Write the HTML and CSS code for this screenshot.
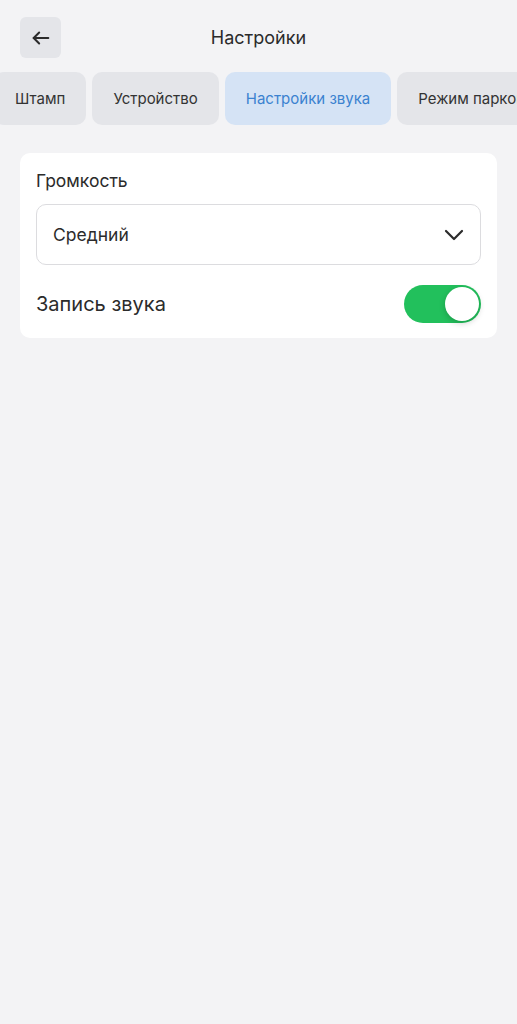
FILE: index.html
```html
<!DOCTYPE html>
<html>
<head>
  <meta charset="UTF-8">
  <title>Настройки</title>
  <link rel="stylesheet" href="styles.css">
</head>
<body>
  <div class="header">
    <button class="back-btn">
      <svg width="22" height="22" viewBox="0 0 24 24" fill="none" stroke="#2b2b2b" stroke-width="2.2" stroke-linecap="round" stroke-linejoin="round">
        <path d="M20 12H4"/>
        <path d="M10 6l-6 6 6 6"/>
      </svg>
    </button>
    <h1 class="title">Настройки</h1>
    <div></div>
  </div>

  <div class="tabs">
    <div class="tab">Штамп</div>
    <div class="tab">Устройство</div>
    <div class="tab active">Настройки звука</div>
    <div class="tab">Режим парковки</div>
  </div>

  <div class="card">
    <div class="label">Громкость</div>
    <div class="select">
      <span>Средний</span>
      <svg width="20" height="12" viewBox="0 0 20 12" fill="none" stroke="#2b2b2b" stroke-width="2.2" stroke-linecap="round" stroke-linejoin="round">
        <path d="M2 2l8 8 8-8"/>
      </svg>
    </div>
    <div class="row">
      <span class="row-label">Запись звука</span>
      <div class="switch on">
        <div class="knob"></div>
      </div>
    </div>
  </div>
</body>
</html>
```

FILE: styles.css
```css
body {
  margin: 0;
  background-color: #f3f3f5;
  font-family: Inter, "Noto Sans", sans-serif;
  color: #2b2b2b;
  overflow-x: hidden;
}
.header {
  display: grid;
  grid-template-columns: 41px 1fr 41px;
  align-items: center;
  padding: 17px 20px 0 20px;
}
.back-btn {
  width: 41px;
  height: 41px;
  border: none;
  border-radius: 6px;
  background-color: #e4e5e9;
  display: flex;
  align-items: center;
  justify-content: center;
  padding: 0;
}
.title {
  margin: 0;
  text-align: center;
  font-size: 18px;
  font-weight: 400;
}
.tabs {
  display: flex;
  gap: 6px;
  margin-top: 14px;
  margin-left: -6px;
  white-space: nowrap;
}
.tab {
  flex-shrink: 0;
  height: 53px;
  display: flex;
  align-items: center;
  padding: 0 21px;
  border-radius: 10px;
  background-color: #e4e5e9;
  font-size: 15px;
  color: #333;
}
.tab.active {
  background-color: #d5e3f5;
  color: #3b82d0;
}
.card {
  margin: 28px 20px 0 20px;
  padding: 13px 16px 15px 16px;
  background-color: #fff;
  border-radius: 10px;
}
.label {
  font-size: 17.5px;
  line-height: 30px;
}
.select {
  margin-top: 8px;
  height: 59px;
  border: 1px solid #dcdcdf;
  border-radius: 10px;
  display: flex;
  align-items: center;
  justify-content: space-between;
  padding: 0 16px;
  font-size: 17.5px;
}
.row {
  display: flex;
  align-items: center;
  justify-content: space-between;
  margin-top: 20px;
}
.row-label {
  font-size: 20px;
}
.switch {
  width: 77px;
  height: 38px;
  box-sizing: border-box;
  border-radius: 19px;
  background-color: #e4e5e9;
  padding: 2px;
  display: flex;
}
.switch.on {
  background-color: #22c05c;
  justify-content: flex-end;
}
.knob {
  width: 34px;
  height: 34px;
  border-radius: 50%;
  background-color: #fff;
  box-shadow: 0 2px 6px rgba(0, 0, 0, 0.2);
}
```
